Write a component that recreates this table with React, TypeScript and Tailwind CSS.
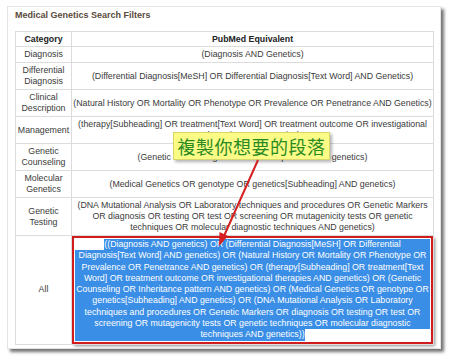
import React from "react";

const rows: { cat: string[]; lines: string[] }[] = [
  { cat: ["Diagnosis"], lines: ["(Diagnosis AND Genetics)"] },
  {
    cat: ["Differential", "Diagnosis"],
    lines: ["(Differential Diagnosis[MeSH] OR Differential Diagnosis[Text Word] AND Genetics)"],
  },
  {
    cat: ["Clinical", "Description"],
    lines: ["(Natural History OR Mortality OR Phenotype OR Prevalence OR Penetrance AND Genetics)"],
  },
  {
    cat: ["Management"],
    lines: [
      "(therapy[Subheading] OR treatment[Text Word] OR treatment outcome OR investigational",
      "therapies AND genetics)",
    ],
  },
  {
    cat: ["Genetic", "Counseling"],
    lines: ["(Genetic Counseling OR Inheritance pattern AND genetics)"],
  },
  {
    cat: ["Molecular", "Genetics"],
    lines: ["(Medical Genetics OR genotype OR genetics[Subheading] AND genetics)"],
  },
  {
    cat: ["Genetic", "Testing"],
    lines: [
      "(DNA Mutational Analysis OR Laboratory techniques and procedures OR Genetic Markers",
      "OR diagnosis OR testing OR test OR screening OR mutagenicity tests OR genetic",
      "techniques OR molecular diagnostic techniques AND genetics)",
    ],
  },
];

// middle lines of the selected "All" query
const allLines = [
  "Diagnosis[Text Word] AND genetics) OR (Natural History OR Mortality OR Phenotype OR",
  "Prevalence OR Penetrance AND genetics) OR (therapy[Subheading] OR treatment[Text",
  "Word] OR treatment outcome OR investigational therapies AND genetics) OR (Genetic",
  "Counseling OR Inheritance pattern AND genetics) OR (Medical Genetics OR genotype OR",
  "genetics[Subheading] AND genetics) OR (DNA Mutational Analysis OR Laboratory",
  "techniques and procedures OR Genetic Markers OR diagnosis OR testing OR test OR",
  "screening OR mutagenicity tests OR genetic techniques OR molecular diagnostic",
];

export default function App() {
  return (
    <div
      className="relative w-[450px] h-[361px] bg-white text-[#3a3a3a] overflow-hidden"
      style={{ fontFamily: '"Liberation Sans", Arial, sans-serif' }}
    >
      {/* card */}
      <div className="ml-[7px] mt-[6px] w-[434px] h-[343px] bg-white border border-[#e4e4e4] shadow-[3px_3px_3px_rgba(0,0,0,0.55)] pl-[7px] pt-[2px]">
        <div className="text-[9px] font-bold text-[#5a4a3c] leading-[12px]">
          Medical Genetics Search Filters
        </div>

        <table className="mt-[10px] w-[419px] table-fixed border-collapse text-[8.8px] leading-[11px]">
          <thead>
            <tr>
              <th className="w-[56px] h-[15px] border border-[#dcdcdc] font-bold text-[#222] p-0">
                Category
              </th>
              <th className="border border-[#dcdcdc] font-bold text-[#222] p-0">PubMed Equivalent</th>
            </tr>
          </thead>
          <tbody>
            {rows.map((r, i) => (
              <tr key={i}>
                <td className="border border-[#dcdcdc] text-center px-0 py-[2px]">
                  {r.cat.map((c, j) => (
                    <div key={j}>{c}</div>
                  ))}
                </td>
                <td className="border border-[#dcdcdc] text-center px-0 py-[2px]">
                  {r.lines.map((l, j) => (
                    <div key={j} className="whitespace-nowrap">
                      {l}
                    </div>
                  ))}
                </td>
              </tr>
            ))}
            <tr>
              <td className="border border-[#dcdcdc] text-center">All</td>
              <td className="border border-[#dcdcdc] p-0 h-[107px]">
                <div className="border-2 border-[#d01c1c] shadow-[2px_2px_3px_rgba(0,0,0,0.45)] bg-white px-[1px] py-[1px] text-white text-center leading-[11.3px]">
                  <div className="flex">
                    <div className="flex-1 bg-white" />
                    <div className="bg-[#3a8ee6] whitespace-nowrap">
                      ((Diagnosis AND genetics) OR (Differential Diagnosis[MeSH] OR Differential
                    </div>
                    <div className="flex-1 bg-[#3a8ee6]" />
                  </div>
                  {allLines.map((l, j) => (
                    <div key={j} className="bg-[#3a8ee6] whitespace-nowrap">
                      {l}
                    </div>
                  ))}
                  <div className="flex">
                    <div className="flex-1 bg-[#3a8ee6]" />
                    <div className="bg-[#3a8ee6] whitespace-nowrap">techniques AND genetics))</div>
                    <div className="flex-1 bg-white" />
                  </div>
                </div>
              </td>
            </tr>
          </tbody>
        </table>
      </div>

      {/* callout */}
      <div
        className="absolute left-[173px] top-[132px] w-[157px] h-[28px] bg-[#fbfb86] border border-[#d8d86a] shadow-[2px_2px_3px_rgba(0,0,0,0.3)] flex items-center justify-center whitespace-nowrap text-[18px] text-[#2a8a22] tracking-[0.5px]"
        style={{ fontFamily: '"Noto Sans CJK TC", "Noto Sans CJK SC", sans-serif' }}
      >
        複製你想要的段落
      </div>

      {/* arrow */}
      <svg className="absolute left-0 top-0" width="450" height="361" viewBox="0 0 450 361">
        <line x1="258" y1="160" x2="224" y2="236" stroke="#d42020" strokeWidth="2" />
        <polygon points="219,246 219.5,232 228,236" fill="#d42020" />
      </svg>
    </div>
  );
}
